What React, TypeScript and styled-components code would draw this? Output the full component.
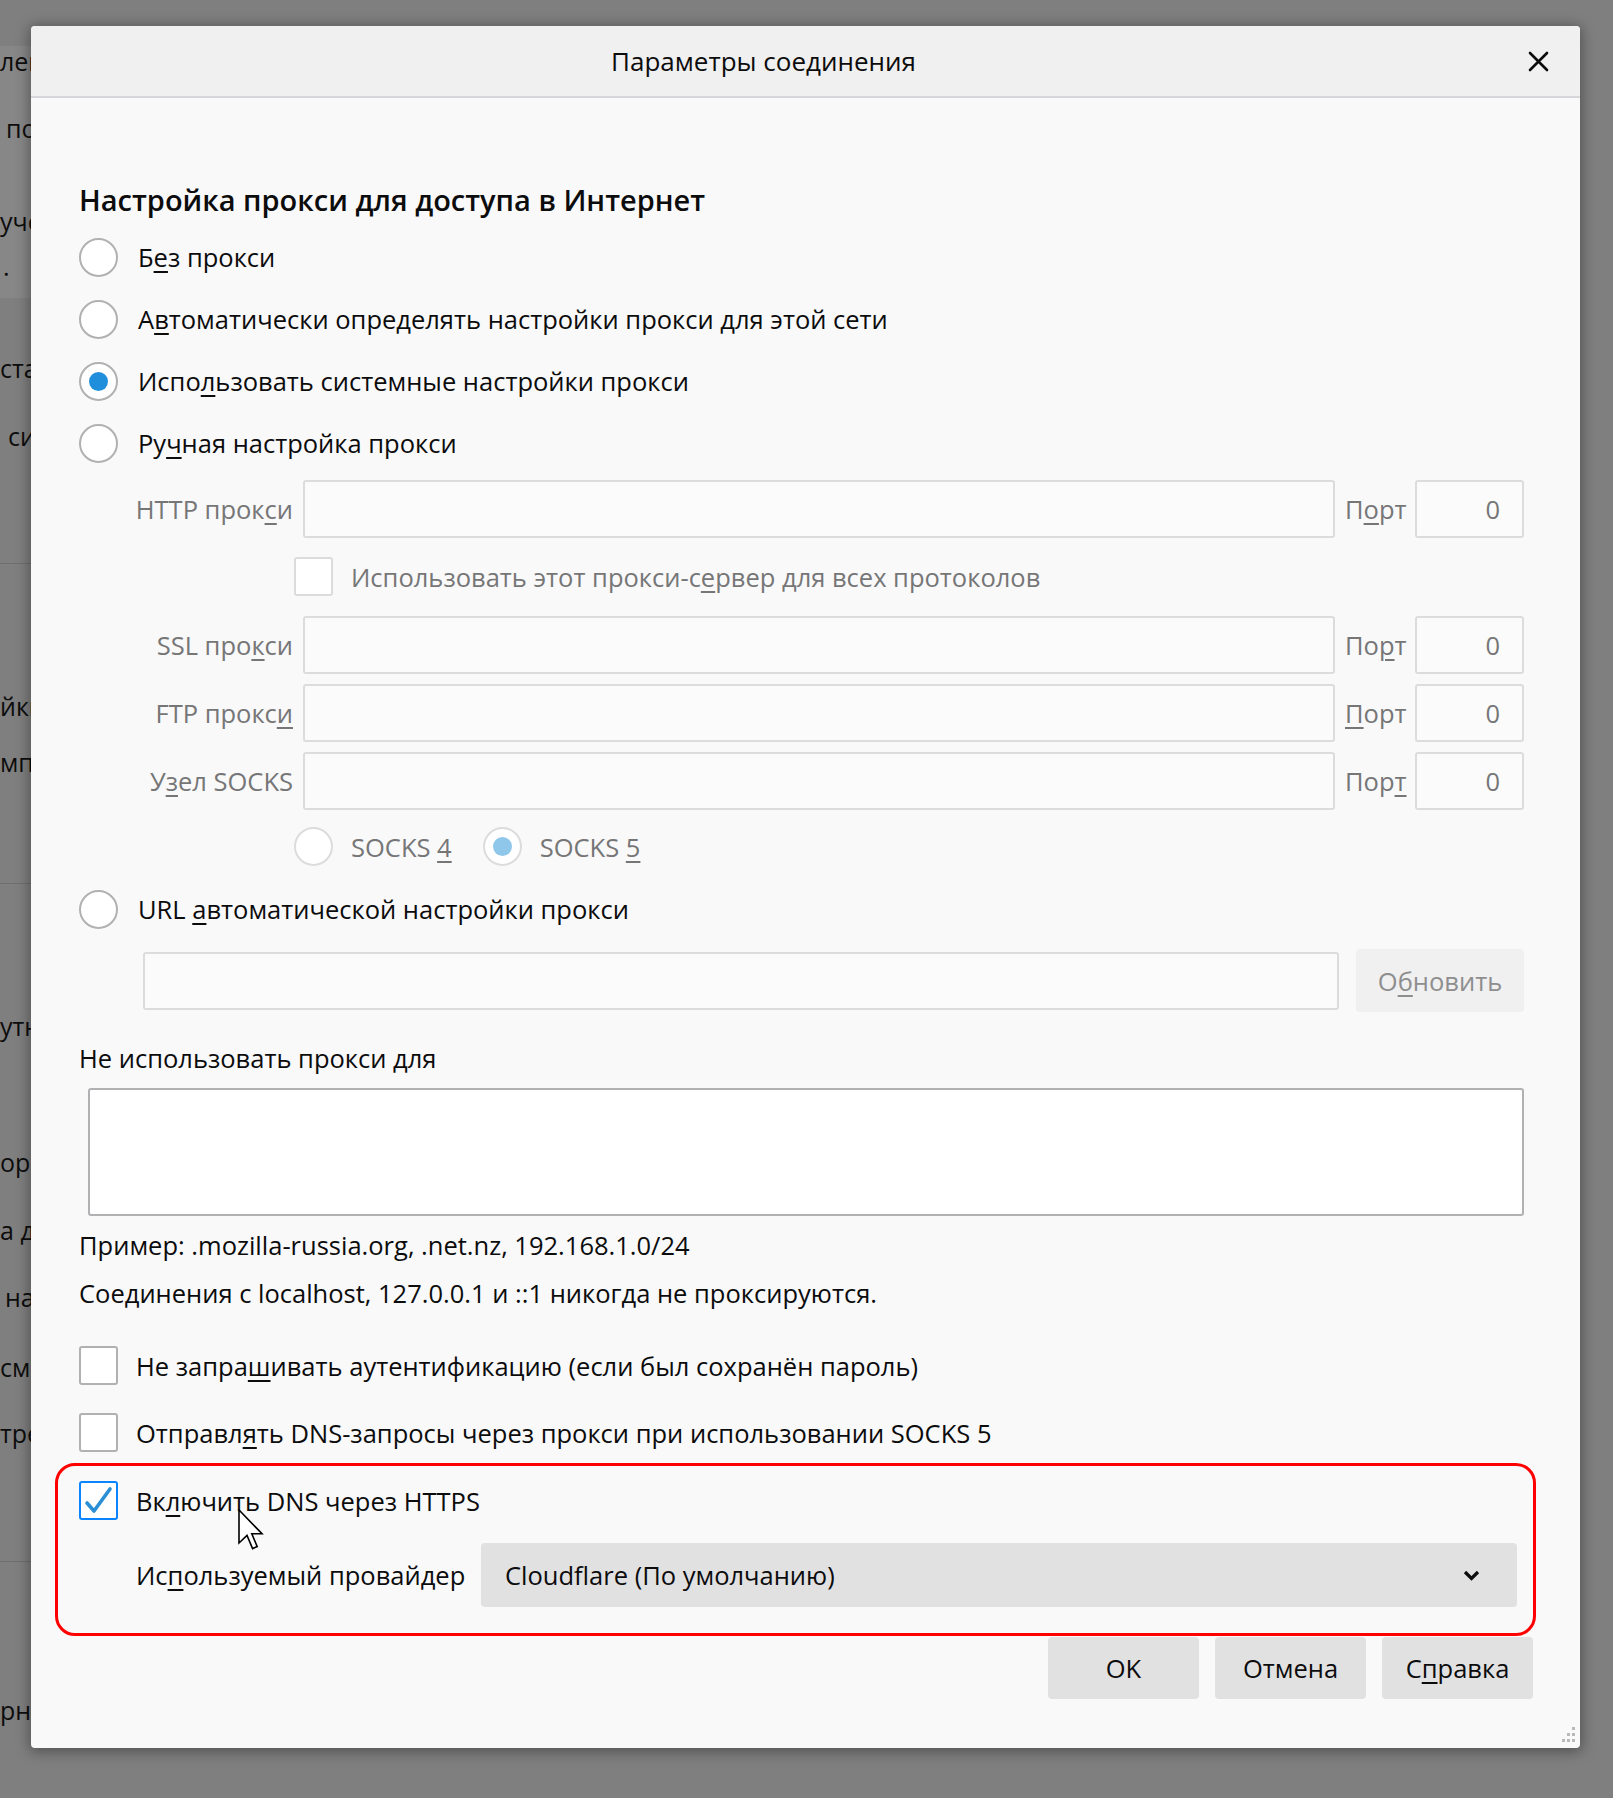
import React from "react";
import styled, { createGlobalStyle } from "styled-components";

const GlobalStyle = createGlobalStyle`
  html, body {
    margin: 0;
    padding: 0;
  }
  body {
    background: #7f7f7f;
    font-family: "Open Sans", "Noto Sans", "Liberation Sans", sans-serif;
    overflow: hidden;
  }
  * {
    box-sizing: border-box;
  }
`;

// faded page text peeking out on the left of the modal
const GHOST_LOWER = [
  { text: "стандарт", gap: 55, indent: 0 },
  { text: "систем", gap: 38, indent: 8 },
];
const GHOST_MIDDLE = [
  { text: "йки", gap: 127, indent: 0 },
  { text: "мпорт", gap: 26, indent: 0 },
];
const GHOST_BOTTOM = [
  { text: "утник", gap: 127, indent: 0 },
  { text: "ормы", gap: 106, indent: 0 },
  { text: "а для", gap: 38, indent: 0 },
  { text: "на", gap: 37, indent: 5 },
  { text: "смотр", gap: 40, indent: 0 },
  { text: "треб", gap: 36, indent: 0 },
];

const App = () => {
  return (
    <>
      <GlobalStyle />
      <Backdrop>
        <Strip>
          <Band>
            <Ghost $gap={0}>ление</Ghost>
            <Ghost $gap={37} $indent={6}>
              пол
            </Ghost>
            <Ghost $gap={63}>учёт</Ghost>
            <Ghost $gap={15} $indent={3}>
              .
            </Ghost>
          </Band>
          {GHOST_LOWER.map((l) => (
            <Ghost key={l.text} $gap={l.gap} $indent={l.indent}>
              {l.text}
            </Ghost>
          ))}
          <Rule $gap={112} />
          {GHOST_MIDDLE.map((l) => (
            <Ghost key={l.text} $gap={l.gap} $indent={l.indent}>
              {l.text}
            </Ghost>
          ))}
          <Rule $gap={106} />
          {GHOST_BOTTOM.map((l) => (
            <Ghost key={l.text} $gap={l.gap} $indent={l.indent}>
              {l.text}
            </Ghost>
          ))}
          <Rule $gap={113} />
          <Ghost $gap={133}>рный</Ghost>
        </Strip>

        <Dialog>
          <TitleBar>
            <Title>Параметры соединения</Title>
            <CloseButton>
              <svg width="21" height="21" viewBox="0 0 21 21">
                <path
                  d="M2 2 L19 19 M19 2 L2 19"
                  stroke="#0c0c0d"
                  strokeWidth="2.6"
                  strokeLinecap="round"
                />
              </svg>
            </CloseButton>
          </TitleBar>

          <Body>
            <Heading>Настройка прокси для доступа в Интернет</Heading>

            <RadioRow $gap={6}>
              <Radio />
              <Label>
                Б<Key>е</Key>з прокси
              </Label>
            </RadioRow>
            <RadioRow>
              <Radio />
              <Label>
                А<Key>в</Key>томатически определять настройки прокси для этой
                сети
              </Label>
            </RadioRow>
            <RadioRow>
              <Radio $checked />
              <Label>
                Испо<Key>л</Key>ьзовать системные настройки прокси
              </Label>
            </RadioRow>
            <RadioRow>
              <Radio />
              <Label>
                Ру<Key>ч</Key>ная настройка прокси
              </Label>
            </RadioRow>

            <FieldRow $gap={6}>
              <FieldLabel>
                HTTP прок<Key>с</Key>и
              </FieldLabel>
              <TextField />
              <PortLabel>
                П<Key>о</Key>рт
              </PortLabel>
              <PortField>0</PortField>
            </FieldRow>

            <IndentRow $gap={19}>
              <CheckBox $disabled />
              <Label $disabled>
                Использовать этот прокси-с<Key>е</Key>рвер для всех протоколов
              </Label>
            </IndentRow>

            <FieldRow $gap={20}>
              <FieldLabel>
                SSL про<Key>к</Key>си
              </FieldLabel>
              <TextField />
              <PortLabel>
                По<Key>р</Key>т
              </PortLabel>
              <PortField>0</PortField>
            </FieldRow>
            <FieldRow $gap={10}>
              <FieldLabel>
                FTP прокс<Key>и</Key>
              </FieldLabel>
              <TextField />
              <PortLabel>
                <Key>П</Key>орт
              </PortLabel>
              <PortField>0</PortField>
            </FieldRow>
            <FieldRow $gap={10}>
              <FieldLabel>
                У<Key>з</Key>ел SOCKS
              </FieldLabel>
              <TextField />
              <PortLabel>
                Пор<Key>т</Key>
              </PortLabel>
              <PortField>0</PortField>
            </FieldRow>

            <IndentRow $gap={17}>
              <Radio $disabled />
              <Label $disabled>
                SOCKS <Key>4</Key>
              </Label>
              <Radio $disabled $checked $spaced />
              <Label $disabled>
                SOCKS <Key>5</Key>
              </Label>
            </IndentRow>

            <RadioRow $gap={12}>
              <Radio />
              <Label>
                URL <Key>а</Key>втоматической настройки прокси
              </Label>
            </RadioRow>

            <UrlRow>
              <TextField />
              <FlatButton $disabled $width={168}>
                О<Key>б</Key>новить
              </FlatButton>
            </UrlRow>

            <PlainText $gap={28}>Не использовать прокси для</PlainText>
            <TextArea />
            <PlainText $gap={11}>
              Пример: .mozilla-russia.org, .net.nz, 192.168.1.0/24
            </PlainText>
            <PlainText $gap={12}>
              Соединения с localhost, 127.0.0.1 и ::1 никогда не проксируются.
            </PlainText>

            <CheckRow $gap={35}>
              <CheckBox />
              <Label>
                Не запра<Key>ш</Key>ивать аутентификацию (если был сохранён
                пароль)
              </Label>
            </CheckRow>
            <CheckRow $gap={28}>
              <CheckBox />
              <Label>
                Отправл<Key>я</Key>ть DNS-запросы через прокси при использовании
                SOCKS 5
              </Label>
            </CheckRow>

            <Highlight>
              <CheckRow>
                <CheckBox $checked>
                  <svg width="35" height="35" viewBox="0 0 35 35">
                    <path
                      d="M6 20 L13 28 L29 6"
                      fill="none"
                      stroke="#2b8fd6"
                      strokeWidth="3.6"
                      strokeLinecap="round"
                      strokeLinejoin="round"
                    />
                  </svg>
                </CheckBox>
                <Label>
                  Вк<Key>л</Key>ючить DNS через HTTPS
                </Label>
              </CheckRow>
              <ProviderRow>
                <ProviderLabel>
                  Ис<Key>п</Key>ользуемый провайдер
                </ProviderLabel>
                <Select>
                  <span>Cloudflare (По умолчанию)</span>
                  <svg width="17" height="11" viewBox="0 0 17 11">
                    <path
                      d="M2 2 L8.5 8.5 L15 2"
                      fill="none"
                      stroke="#0c0c0d"
                      strokeWidth="3.2"
                    />
                  </svg>
                </Select>
              </ProviderRow>
              <Pointer width="28" height="44" viewBox="0 0 14 22">
                <path
                  d="M0.5 0.5 L0.5 17 L4.5 13.2 L7.3 19.8 L9.6 18.8 L6.9 12.4 L12 12.4 Z"
                  fill="#ffffff"
                  stroke="#000000"
                  strokeWidth="0.8"
                  strokeLinejoin="miter"
                />
              </Pointer>
            </Highlight>

            <ButtonBar>
              <FlatButton $width={151}>OK</FlatButton>
              <FlatButton $width={151}>Отмена</FlatButton>
              <FlatButton $width={151}>
                С<Key>п</Key>равка
              </FlatButton>
            </ButtonBar>
          </Body>

          <Grip width="18" height="17" viewBox="0 0 18 17">
            <rect x="13" y="0" width="3" height="3" fill="#b9b9bb" />
            <rect x="8" y="6" width="3" height="3" fill="#b9b9bb" />
            <rect x="13" y="6" width="3" height="3" fill="#b9b9bb" />
            <rect x="3" y="12" width="3" height="3" fill="#b9b9bb" />
            <rect x="8" y="12" width="3" height="3" fill="#b9b9bb" />
            <rect x="13" y="12" width="3" height="3" fill="#b9b9bb" />
          </Grip>
        </Dialog>
      </Backdrop>
    </>
  );
};

export default App;

const TEXT = "#0c0c0d";
const MUTED = "#767677";

const Backdrop = styled.div`
  position: relative;
  width: 1613px;
  height: 1798px;
  overflow: hidden;
  background: #7f7f7f;
`;

const Strip = styled.div`
  display: flex;
  flex-direction: column;
  width: 140px;
  padding-top: 46px;
`;

const Band = styled.div`
  display: flex;
  flex-direction: column;
  height: 252px;
  background: #878787;
`;

const Ghost = styled.div<{ $gap: number; $indent?: number }>`
  margin-top: ${(p) => p.$gap}px;
  padding-left: ${(p) => p.$indent ?? 0}px;
  height: 30px;
  line-height: 30px;
  font-size: 25px;
  color: #0d0d0d;
  white-space: nowrap;
`;

const Rule = styled.div<{ $gap: number }>`
  margin-top: ${(p) => p.$gap}px;
  height: 1px;
  background: #6e6e6e;
`;

const Dialog = styled.div`
  position: absolute;
  left: 31px;
  top: 26px;
  width: 1549px;
  height: 1722px;
  display: flex;
  flex-direction: column;
  background: #f9f9fa;
  border-radius: 4px;
  box-shadow: 0 2px 14px 2px rgba(0, 0, 0, 0.35);
  color: ${TEXT};
  font-size: 25.5px;
`;

const TitleBar = styled.div`
  display: flex;
  align-items: center;
  height: 72px;
  flex: none;
  background: #f0f0f0;
  border-bottom: 2px solid #d7d7db;
  border-radius: 4px 4px 0 0;
`;

const Title = styled.div`
  flex: 1;
  text-align: center;
  font-size: 26px;
  line-height: 36px;
`;

const CloseButton = styled.div`
  width: 84px;
  display: flex;
  justify-content: center;
  align-items: center;
`;

const Body = styled.div`
  display: flex;
  flex-direction: column;
  padding: 0 56px 0 48px;
`;

const Heading = styled.div`
  margin-top: 82px;
  font-size: 29px;
  font-weight: 600;
  line-height: 40px;
  white-space: nowrap;
`;

const Key = styled.u`
  text-decoration-thickness: 2px;
  text-underline-offset: 4px;
`;

const Label = styled.span<{ $disabled?: boolean }>`
  line-height: 36px;
  white-space: nowrap;
  color: ${(p) => (p.$disabled ? MUTED : TEXT)};
`;

const RadioRow = styled.div<{ $gap?: number }>`
  display: flex;
  align-items: center;
  gap: 20px;
  height: 62px;
  margin-top: ${(p) => p.$gap ?? 0}px;
`;

const Radio = styled.span<{
  $checked?: boolean;
  $disabled?: boolean;
  $spaced?: boolean;
}>`
  position: relative;
  flex: none;
  width: 39px;
  height: 39px;
  margin-left: ${(p) => (p.$spaced ? "13px" : "0")};
  border-radius: 50%;
  background: #fff;
  border: 2px solid ${(p) => (p.$disabled ? "#dcdcde" : "#b1b1b3")};

  &::after {
    content: "";
    display: ${(p) => (p.$checked ? "block" : "none")};
    position: absolute;
    left: 50%;
    top: 50%;
    width: 19px;
    height: 19px;
    margin: -9.5px 0 0 -9.5px;
    border-radius: 50%;
    background: ${(p) => (p.$disabled ? "#8fc7ea" : "#1f8fdb")};
  }
`;

const CheckBox = styled.span<{ $checked?: boolean; $disabled?: boolean }>`
  flex: none;
  display: flex;
  align-items: center;
  justify-content: center;
  width: 39px;
  height: 39px;
  border-radius: 3px;
  background: #fff;
  border: 2px solid
    ${(p) => (p.$checked ? "#0a84ff" : p.$disabled ? "#dcdcde" : "#b1b1b3")};
`;

const FieldRow = styled.div<{ $gap: number }>`
  display: flex;
  align-items: center;
  gap: 10px;
  height: 58px;
  margin-top: ${(p) => p.$gap}px;
`;

const FieldLabel = styled.span`
  flex: none;
  width: 214px;
  text-align: right;
  color: ${MUTED};
  white-space: nowrap;
`;

const TextField = styled.div`
  flex: 1;
  height: 58px;
  background: #fbfbfb;
  border: 2px solid #dcdcde;
  border-radius: 3px;
`;

const PortLabel = styled.span`
  flex: none;
  width: 60px;
  color: ${MUTED};
`;

const PortField = styled.div`
  flex: none;
  width: 109px;
  height: 58px;
  padding-right: 22px;
  display: flex;
  align-items: center;
  justify-content: flex-end;
  color: ${MUTED};
  background: #fbfbfb;
  border: 2px solid #dcdcde;
  border-radius: 3px;
`;

const IndentRow = styled.div<{ $gap: number }>`
  display: flex;
  align-items: center;
  gap: 18px;
  height: 39px;
  margin-left: 215px;
  margin-top: ${(p) => p.$gap}px;
`;

const UrlRow = styled.div`
  display: flex;
  align-items: center;
  gap: 17px;
  height: 63px;
  margin: 9px 0 0 64px;
`;

const FlatButton = styled.div<{ $width: number; $disabled?: boolean }>`
  flex: none;
  width: ${(p) => p.$width}px;
  height: ${(p) => (p.$disabled ? 63 : 62)}px;
  display: flex;
  align-items: center;
  justify-content: center;
  border-radius: 4px;
  background: ${(p) => (p.$disabled ? "#f0f0f0" : "#e1e1e2")};
  color: ${(p) => (p.$disabled ? "#8e8e8f" : TEXT)};
`;

const PlainText = styled.div<{ $gap: number }>`
  margin-top: ${(p) => p.$gap}px;
  line-height: 36px;
  white-space: nowrap;
`;

const TextArea = styled.div`
  height: 128px;
  margin: 12px 0 0 9px;
  background: #fff;
  border: 2px solid #b1b1b3;
  border-radius: 3px;
`;

const CheckRow = styled.div<{ $gap?: number }>`
  display: flex;
  align-items: center;
  gap: 18px;
  height: 39px;
  margin-top: ${(p) => p.$gap ?? 0}px;
`;

const Highlight = styled.div`
  position: relative;
  display: flex;
  flex-direction: column;
  margin: 11px -12px 0 -24px;
  padding: 15px 16px 26px 21px;
  border: 3px solid #ff0000;
  border-radius: 20px;
`;

const ProviderRow = styled.div`
  display: flex;
  align-items: center;
  height: 64px;
  margin-top: 23px;
  padding-left: 57px;
`;

const ProviderLabel = styled.span`
  flex: none;
  width: 345px;
  white-space: nowrap;
`;

const Select = styled.div`
  flex: 1;
  height: 64px;
  display: flex;
  align-items: center;
  justify-content: space-between;
  padding: 0 37px 0 24px;
  background: #e1e1e2;
  border-radius: 4px;
`;

const Pointer = styled.svg`
  position: absolute;
  left: 180px;
  top: 43px;
`;

const ButtonBar = styled.div`
  display: flex;
  justify-content: flex-end;
  gap: 16px;
  margin: 1px -9px 0 0;
`;

const Grip = styled.svg`
  position: absolute;
  right: 3px;
  bottom: 4px;
`;
